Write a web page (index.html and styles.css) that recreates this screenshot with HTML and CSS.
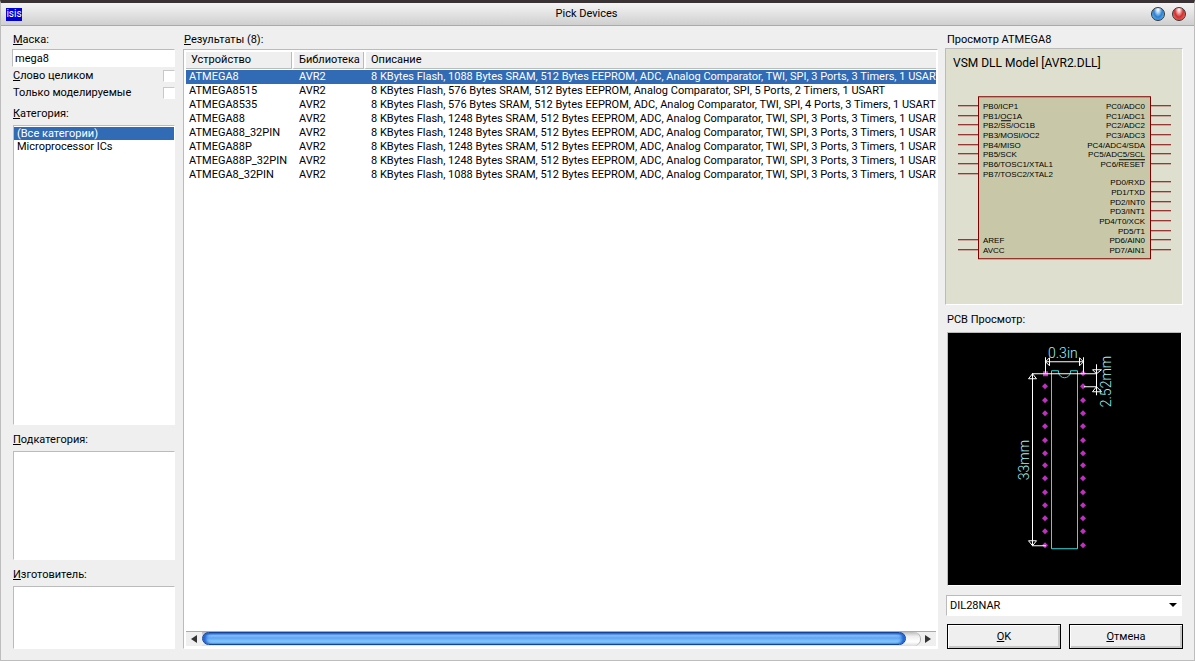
FILE: index.html
```html
<!DOCTYPE html>
<html lang="ru">
  <head>
    <meta charset="UTF-8" />
    <meta name="viewport" content="width=device-width, initial-scale=1.0" />
    <title>Pick Devices</title>
    <link rel="stylesheet" href="styles.css">
  </head>
  <body>
    <div class="window">
      <header class="titlebar">
        <span class="app-icon">isis</span>
        <h1>Pick Devices</h1>
        <div class="window-buttons">
          <button type="button" class="orb orb-blue" aria-label="Help"></button>
          <button type="button" class="orb orb-red" aria-label="Close"></button>
        </div>
      </header>

      <main class="content">
        <form class="filters">
          <label for="mask"><u>М</u>аска:</label>
          <input type="text" id="mask" class="field" value="mega8">
          <div class="check-row">
            <label for="whole"><u>С</u>лово целиком</label>
            <input type="checkbox" id="whole">
          </div>
          <div class="check-row">
            <label for="models">Только моделируемые</label>
            <input type="checkbox" id="models">
          </div>
          <label for="category" class="category-label"><u>К</u>атегория:</label>
          <select id="category" class="listbox listbox-category" size="8">
            <option selected>(Все категории)</option>
            <option>Microprocessor ICs</option>
          </select>
          <label for="subcategory" class="list-label"><u>П</u>одкатегория:</label>
          <select id="subcategory" class="listbox listbox-subcategory" size="4"></select>
          <label for="vendor" class="list-label"><u>И</u>зготовитель:</label>
          <select id="vendor" class="listbox listbox-vendor" size="3"></select>
        </form>

        <section class="results">
          <h2><u>Р</u>езультаты (8):</h2>
          <div class="results-box">
            <div class="table-area">
              <table>
                <thead>
                  <tr>
                    <th class="col-device">Устройство</th>
                    <th class="col-library">Библиотека</th>
                    <th>Описание</th>
                  </tr>
                </thead>
                <tbody>
                  <tr class="selected"><td>ATMEGA8</td><td>AVR2</td><td>8 KBytes Flash, 1088 Bytes SRAM, 512 Bytes EEPROM, ADC, Analog Comparator, TWI, SPI, 3 Ports, 3 Timers, 1 USART</td></tr>
                  <tr><td>ATMEGA8515</td><td>AVR2</td><td>8 KBytes Flash, 576 Bytes SRAM, 512 Bytes EEPROM, Analog Comparator, SPI, 5 Ports, 2 Timers, 1 USART</td></tr>
                  <tr><td>ATMEGA8535</td><td>AVR2</td><td>8 KBytes Flash, 576 Bytes SRAM, 512 Bytes EEPROM, ADC, Analog Comparator, TWI, SPI, 4 Ports, 3 Timers, 1 USART</td></tr>
                  <tr><td>ATMEGA88</td><td>AVR2</td><td>8 KBytes Flash, 1248 Bytes SRAM, 512 Bytes EEPROM, ADC, Analog Comparator, TWI, SPI, 3 Ports, 3 Timers, 1 USART</td></tr>
                  <tr><td>ATMEGA88_32PIN</td><td>AVR2</td><td>8 KBytes Flash, 1248 Bytes SRAM, 512 Bytes EEPROM, ADC, Analog Comparator, TWI, SPI, 3 Ports, 3 Timers, 1 USART</td></tr>
                  <tr><td>ATMEGA88P</td><td>AVR2</td><td>8 KBytes Flash, 1248 Bytes SRAM, 512 Bytes EEPROM, ADC, Analog Comparator, TWI, SPI, 3 Ports, 3 Timers, 1 USART</td></tr>
                  <tr><td>ATMEGA88P_32PIN</td><td>AVR2</td><td>8 KBytes Flash, 1248 Bytes SRAM, 512 Bytes EEPROM, ADC, Analog Comparator, TWI, SPI, 3 Ports, 3 Timers, 1 USART</td></tr>
                  <tr><td>ATMEGA8_32PIN</td><td>AVR2</td><td>8 KBytes Flash, 1088 Bytes SRAM, 512 Bytes EEPROM, ADC, Analog Comparator, TWI, SPI, 3 Ports, 3 Timers, 1 USART</td></tr>
                </tbody>
              </table>
            </div>
            <div class="scrollbar">
              <button type="button" class="scroll-arrow" aria-label="Scroll left">
                <svg width="6" height="8" viewBox="0 0 6 8"><path d="M6 0v8L0 4z" /></svg>
              </button>
              <div class="scroll-track"><div class="scroll-thumb"></div></div>
              <button type="button" class="scroll-arrow" aria-label="Scroll right">
                <svg width="6" height="8" viewBox="0 0 6 8"><path d="M0 0v8l6-4z" /></svg>
              </button>
            </div>
          </div>
        </section>

        <aside class="preview">
          <h2>Просмотр ATMEGA8</h2>
          <div class="schematic">
            <svg viewBox="0 0 236 254">
              <text class="model" x="7" y="18">VSM DLL Model [AVR2.DLL]</text>
              <rect class="chip" x="32.5" y="47.5" width="172" height="162" />
              <path class="pins" d="M12 56.5h20M12 66.5h20M12 75.5h20M12 85.5h20M12 95.5h20M12 104.5h20M12 114.5h20M12 124.5h20M12 190.5h20M12 200.5h20
                M205 56.5h20M205 66.5h20M205 75.5h20M205 85.5h20M205 95.5h20M205 104.5h20M205 114.5h20
                M205 132.5h20M205 142.5h20M205 152.5h20M205 161.5h20M205 171.5h20M205 181.5h20M205 190.5h20M205 200.5h20" />
              <path class="overline" d="M55 71.5h10M173 110.5h26" />
              <g class="pin-names">
                <text x="37" y="60">PB0/ICP1</text>
                <text x="37" y="70">PB1/OC1A</text>
                <text x="37" y="79">PB2/SS/OC1B</text>
                <text x="37" y="89">PB3/MOSI/OC2</text>
                <text x="37" y="99">PB4/MISO</text>
                <text x="37" y="108">PB5/SCK</text>
                <text x="37" y="118">PB6/TOSC1/XTAL1</text>
                <text x="37" y="128">PB7/TOSC2/XTAL2</text>
                <text x="37" y="194">AREF</text>
                <text x="37" y="204">AVCC</text>
              </g>
              <g class="pin-names pin-names-right">
                <text x="199" y="60">PC0/ADC0</text>
                <text x="199" y="70">PC1/ADC1</text>
                <text x="199" y="79">PC2/ADC2</text>
                <text x="199" y="89">PC3/ADC3</text>
                <text x="199" y="99">PC4/ADC4/SDA</text>
                <text x="199" y="108">PC5/ADC5/SCL</text>
                <text x="199" y="118">PC6/RESET</text>
                <text x="199" y="136">PD0/RXD</text>
                <text x="199" y="146">PD1/TXD</text>
                <text x="199" y="156">PD2/INT0</text>
                <text x="199" y="165">PD3/INT1</text>
                <text x="199" y="175">PD4/T0/XCK</text>
                <text x="199" y="185">PD5/T1</text>
                <text x="199" y="194">PD6/AIN0</text>
                <text x="199" y="204">PD7/AIN1</text>
              </g>
            </svg>
          </div>

          <h2 class="pcb-label">PCB Просмотр:</h2>
          <div class="pcb">
            <svg viewBox="0 0 233 252">
              <defs>
                <path id="pad" d="M0-3L3 0 0 3-3 0z" />
              </defs>
              <path class="outline" d="M103.5 37.5h7v2c1 3 3 5 6 5s5-2 6-5v-2h7v178h-26z" />
              <g class="pads">
                <rect x="95" y="38" width="5" height="5" />
                <use href="#pad" x="97" y="53" /><use href="#pad" x="97" y="67" /><use href="#pad" x="97" y="80" />
                <use href="#pad" x="97" y="93" /><use href="#pad" x="97" y="107" /><use href="#pad" x="97" y="120" />
                <use href="#pad" x="97" y="132" /><use href="#pad" x="97" y="145" /><use href="#pad" x="97" y="159" />
                <use href="#pad" x="97" y="172" /><use href="#pad" x="97" y="185" /><use href="#pad" x="97" y="198" />
                <use href="#pad" x="97" y="212" />
                <use href="#pad" x="135" y="40" /><use href="#pad" x="135" y="53" /><use href="#pad" x="135" y="67" />
                <use href="#pad" x="135" y="80" /><use href="#pad" x="135" y="93" /><use href="#pad" x="135" y="107" />
                <use href="#pad" x="135" y="120" /><use href="#pad" x="135" y="132" /><use href="#pad" x="135" y="145" />
                <use href="#pad" x="135" y="159" /><use href="#pad" x="135" y="172" /><use href="#pad" x="135" y="185" />
                <use href="#pad" x="135" y="198" /><use href="#pad" x="135" y="212" />
              </g>
              <path class="dims" d="M97.5 40V24M135.5 40V24M97.5 28.5h38M97.5 28.5l4-4v8zM135.5 28.5l-4-4v8z
                M84 40.5h65M84.5 40v172M84 212.5h14M84.5 40.5l-4 5h8zM84.5 212.5l-4-5h8z
                M148.5 31v31M136 53.5h13M148.5 40.5l-4-4h9zM148.5 53.5l-4 5h9z" />
              <g class="dim-text">
                <text x="100" y="25">0.3in</text>
                <text transform="translate(81 147) rotate(-90)">33mm</text>
                <text transform="translate(163 74) rotate(-90)">2.52mm</text>
              </g>
            </svg>
          </div>

          <div class="package">
            <select aria-label="PCB package">
              <option>DIL28NAR</option>
            </select>
          </div>
          <div class="actions">
            <button type="button"><u>O</u>K</button>
            <button type="button"><u>О</u>тмена</button>
          </div>
        </aside>
      </main>
    </div>
  </body>
</html>
```

FILE: styles.css
```css
* {
  box-sizing: border-box;
}
body {
  margin: 0;
  background: #000;
  color: #000;
  font-family: Roboto, "Liberation Sans", Arial, sans-serif;
  font-size: 11px;
  line-height: 14px;
}
input,
select,
button {
  font: inherit;
  color: inherit;
  margin: 0;
  outline: none;
}
h1,
h2 {
  margin: 0;
  font-size: 11px;
  font-weight: normal;
}
.window {
  display: flex;
  flex-direction: column;
  min-height: 100vh;
  border: 1px solid #bdbdbd;
  border-top: 3px solid #3a3335;
  background: #efefef;
}

/* title bar */
.titlebar {
  display: flex;
  align-items: center;
  justify-content: space-between;
  height: 23px;
  padding: 0 8px 0 5px;
  background: linear-gradient(#f4f4f4, #e6e6e6 40%, #cfcfcf);
  border-bottom: 1px solid #aaa;
  border-radius: 6px 6px 0 0;
}
.app-icon {
  width: 16px;
  height: 13px;
  background: #0000d8;
  color: #fff;
  font-size: 10px;
  line-height: 12px;
  text-align: center;
}
.window-buttons {
  display: flex;
  gap: 7px;
}
.orb {
  width: 14px;
  height: 14px;
  padding: 0;
  border: 1px solid #333;
  border-radius: 50%;
}
.orb-blue {
  background: radial-gradient(ellipse at 50% 15%, #fff 0, #b5d8f5 20%, #2c7fd0 50%, #4aa6ee 75%, #a5e4ff);
}
.orb-red {
  background: radial-gradient(ellipse at 50% 15%, #fff 0, #f5b5b0 20%, #cf3030 50%, #ee5a50 75%, #ffb0a5);
}

/* layout */
.content {
  flex: 1;
  display: grid;
  grid-template-columns: 163px minmax(0, 1fr) 238px;
  padding: 7px 11px 11px;
}
.filters,
.results,
.preview {
  display: flex;
  flex-direction: column;
  min-height: 0;
}
.filters label {
  padding-left: 1px;
}
.results {
  margin: 0 7px 0 8px;
}
.results h2 {
  padding-left: 1px;
}

/* filters */
.field {
  width: 100%;
  height: 18px;
  margin-top: 2px;
  padding: 0 2px;
  border: 1px solid #fff;
  border-top-color: #bbb;
  border-left-color: #bbb;
  background: #fff;
}
.check-row {
  display: flex;
  align-items: center;
  justify-content: space-between;
  height: 17px;
}
.check-row input {
  appearance: none;
  width: 12px;
  height: 12px;
  border: 1px solid #fff;
  border-top-color: #c8c8c8;
  border-left-color: #c8c8c8;
  background: #fff;
}
.category-label {
  margin-top: 6px;
}
.list-label {
  margin-top: 8px;
}
.listbox {
  min-height: 0;
  margin: 4px 0 0 1px;
  padding: 1px 0;
  border: 1px solid #fff;
  border-top-color: #bbb;
  border-left-color: #bbb;
  border-radius: 0;
  background: #fff;
  overflow: hidden;
}
.listbox-category {
  flex: 297 1 0;
}
.listbox-subcategory {
  flex: 105 1 0;
}
.listbox-vendor {
  flex: 59 1 0;
}
.listbox option {
  min-height: 13px;
  padding: 0 3px;
  line-height: 13px;
}
.listbox option:checked {
  background: linear-gradient(#316ab5, #316ab5);
  color: #fff;
}

/* results */
.results-box {
  flex: 1;
  display: flex;
  flex-direction: column;
  margin-top: 2px;
  padding: 2px 1px 2px 2px;
  border: 1px solid #fff;
  border-top-color: #bbb;
  border-left-color: #bbb;
  background: #fff;
}
.table-area {
  flex: 1;
  overflow: hidden;
}
table {
  width: 100%;
  table-layout: fixed;
  border-collapse: separate;
  border-spacing: 0;
}
th,
td {
  padding: 0 3px;
  text-align: left;
  font-weight: normal;
  white-space: nowrap;
  overflow: hidden;
}
th {
  height: 17px;
  padding: 0 5px;
  border-bottom: 1px solid #bbb;
  border-left: 2px solid #fff;
  background: #efefef;
  box-shadow: inset -1px 0 #bbb;
}
th:first-child {
  border-left: 0;
}
th:last-child {
  box-shadow: none;
}
td {
  height: 14px;
  padding: 0 0 0 7px;
}
td:first-child {
  padding-left: 3px;
}
tbody::before {
  content: "";
  display: block;
  height: 1px;
}
.col-device {
  width: 106px;
}
.col-library {
  width: 72px;
}
.selected td {
  background: #316ab5;
  color: #fff;
}

/* scrollbar */
.scrollbar {
  display: flex;
  height: 15px;
  border-top: 1px solid #aaa;
  background: #efefef;
}
.scroll-arrow {
  display: flex;
  align-items: center;
  justify-content: center;
  width: 16px;
  padding: 0;
  border: 0;
  background: none;
  fill: #333;
}
.scroll-track {
  flex: 1;
  background: linear-gradient(#bbb, #eee 30%, #fff 70%, #ddd);
  border-radius: 0 8px 8px 0;
  box-shadow: 1px 0 #aaa;
}
.scroll-thumb {
  width: 98%;
  height: 13px;
  border: 1px solid #14439b;
  border-radius: 7px;
  background: linear-gradient(#2c6fd4, #8fc1f8 20%, #5ea5f2 45%, #70b4f8 60%, #a4e8ff);
  box-shadow: inset 3px 0 3px #1f62d0, inset -3px 0 3px #1f62d0;
}

/* preview */
.preview h2 {
  padding-left: 2px;
}
.schematic,
.pcb {
  min-height: 0;
  border: 1px solid #fff;
  border-top-color: #bbb;
  border-left-color: #bbb;
}
.schematic {
  flex: 255 1 0;
  margin-top: 1px;
  background: #dfdfcf;
}
.schematic svg,
.pcb svg {
  display: block;
  width: 100%;
  height: 100%;
}
.model {
  font-size: 12px;
}
.chip {
  fill: #c8c8a8;
  stroke: #800000;
}
.pins {
  stroke: #800000;
}
.overline {
  stroke: #000;
}
.pin-names {
  font-family: "Liberation Sans", Arial, sans-serif;
  font-size: 8px;
}
.pin-names-right {
  text-anchor: end;
}
.pcb-label {
  margin-top: 8px;
}
.pcb {
  flex: 253 1 0;
  margin: 5px 1px 0 2px;
  background: #000;
}
.outline {
  fill: none;
  stroke: #40d8d8;
}
.pads {
  fill: #c030c0;
}
.dims {
  fill: none;
  stroke: #fff;
}
.dim-text {
  fill: #a0f0f0;
  font-size: 14px;
  font-weight: 300;
}
.package {
  position: relative;
  margin: 9px 1px 0 1px;
}
.package select {
  display: block;
  appearance: none;
  width: 100%;
  height: 21px;
  padding: 0 3px;
  border: 1px solid #fff;
  border-top-color: #bbb;
  border-left-color: #bbb;
  border-radius: 0;
  background: #fff;
}
.package::after {
  content: "";
  position: absolute;
  top: 8px;
  right: 5px;
  border: 4px solid transparent;
  border-top-color: #000;
  border-bottom: 0;
  pointer-events: none;
}
.actions {
  display: grid;
  grid-template-columns: 1fr 1fr;
  gap: 8px;
  margin: 8px 0 0 2px;
}
.actions button {
  height: 25px;
  padding: 0;
  border: 1px solid #000;
  background: #efefef;
  box-shadow: inset 1px 1px #fff, inset -2px -2px #c8c8c8;
}
```
